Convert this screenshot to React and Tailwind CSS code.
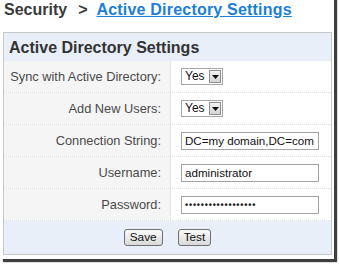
const rows = [
  { label: "Sync with Active Directory:", kind: "select", value: "Yes" },
  { label: "Add New Users:", kind: "select", value: "Yes" },
  { label: "Connection String:", kind: "text", value: "DC=my domain,DC=com" },
  { label: "Username:", kind: "text", value: "administrator" },
  { label: "Password:", kind: "password", value: "••••••••••••••••••" },
];

const Dropdown = ({ value }) => (
  <div className="flex h-[17px] w-[42px] items-stretch border border-[#a7a7a7] bg-white">
    <span className="flex-1 pl-[3px] text-[12px] leading-[15px] text-[#111]">{value}</span>
    <span className="m-px flex w-[12px] items-center justify-center border border-[#8e8e8e] bg-gradient-to-b from-[#f2f2f2] to-[#d6d6d6]">
      <svg width="7" height="4" viewBox="0 0 7 4">
        <path d="M0 0h7L3.5 4z" fill="#111" />
      </svg>
    </span>
  </div>
);

const Field = ({ value, kind }) => (
  <input
    readOnly
    type="text"
    value={value}
    className={
      "h-[18px] w-[138px] border border-[#a5a5a5] bg-white pl-[3px] text-[#111] outline-none " +
      (kind === "password" ? "text-[9px] font-bold tracking-[0.8px]" : "text-[11.6px]")
    }
  />
);

const Button = ({ children }) => (
  <button className="h-[17px] rounded-[3px] border border-[#6f6f6f] bg-gradient-to-b from-[#fafafa] to-[#d9d9d9] px-[5px] text-[11.8px] leading-[15px] text-[#111]">
    {children}
  </button>
);

export default function App() {
  return (
    <div className="h-[265px] w-[339px] overflow-hidden bg-white font-['Liberation_Sans',Arial,sans-serif]">
      <div className="-mt-[4px] h-[263px] w-[334px] bg-white pt-[4px] shadow-[3px_3px_1px_rgba(0,0,0,0.75)]">
        <div className="flex items-center pl-[4px] text-[16px] font-bold leading-[20px] text-[#3a3a3a]">
          <span>Security</span>
          <span className="ml-[11px]">&gt;</span>
          <a className="ml-[9px] tracking-[0.2px] text-[#1b7fd8] underline">Active Directory Settings</a>
        </div>

        <div className="ml-[3px] mt-[12px] w-[329px] border border-[#c8c8c8]">
          <div className="h-[28px] bg-[#e9eff9] pl-[5px] text-[16px] font-bold leading-[29px] text-[#333]">
            Active Directory Settings
          </div>
          {rows.map((r) => (
            <div key={r.label} className="grid h-[32px] grid-cols-[167px_1fr] border-b border-dotted border-[#dddddd]">
              <div className="flex items-center justify-end border-r border-[#e4e4e4] bg-[#f5f5f5] pr-[9px] text-[12.8px] text-[#4a4a4a]">
                {r.label}
              </div>
              <div className="flex items-center pl-[10px]">
                {r.kind === "select" ? <Dropdown value={r.value} /> : <Field value={r.value} kind={r.kind} />}
              </div>
            </div>
          ))}
          <div className="flex h-[33px] items-center justify-center gap-[15px] bg-[#e9eff9]">
            <Button>Save</Button>
            <Button>Test</Button>
          </div>
        </div>
      </div>
    </div>
  );
}
